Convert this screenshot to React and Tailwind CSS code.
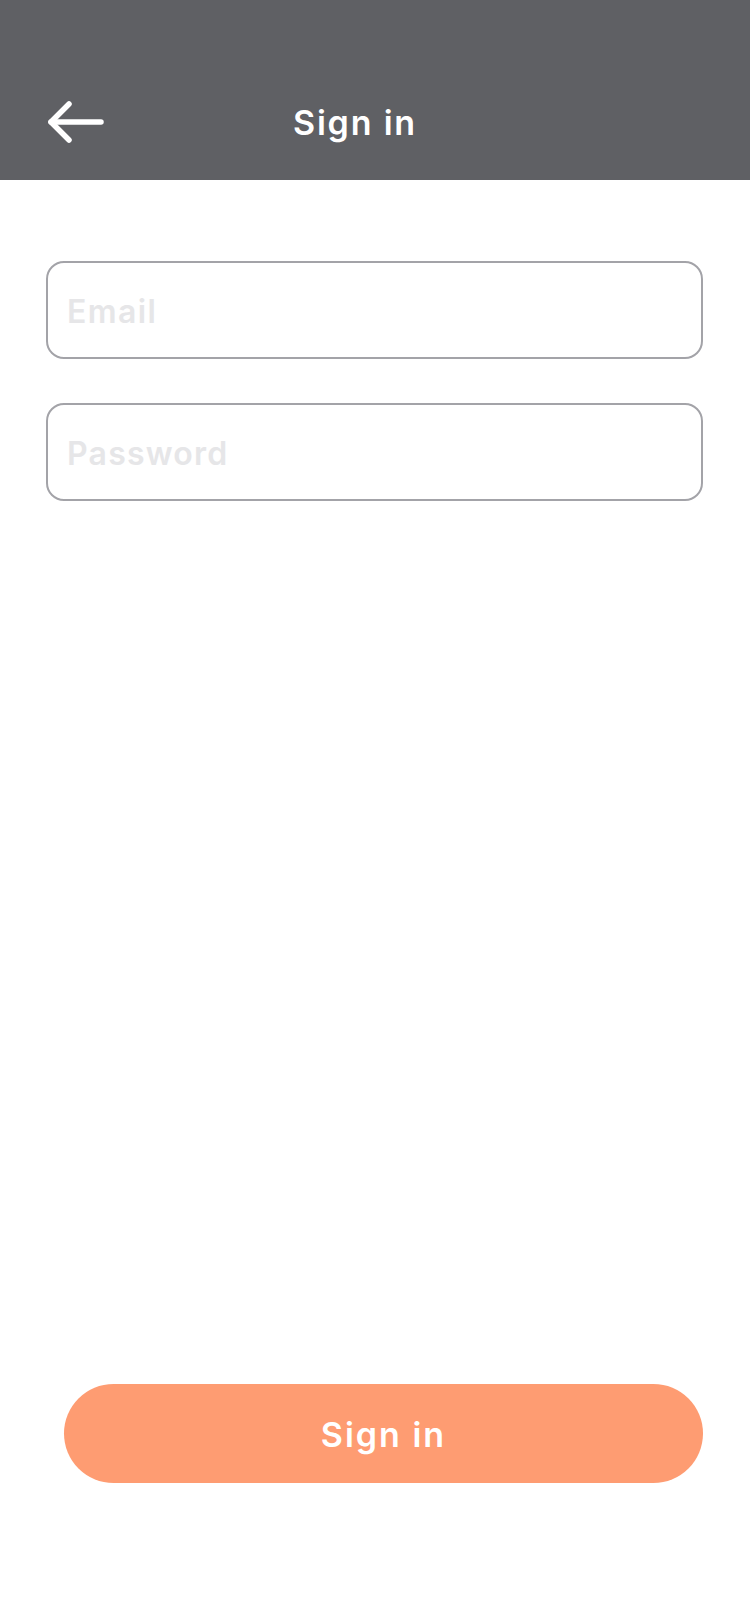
import React from "react";

export default function App() {
  const font = { fontFamily: "Inter, 'Noto Sans', sans-serif" };
  return (
    <div className="w-[750px] h-[1624px] bg-white flex flex-col" style={font}>
      <header className="h-[180px] bg-[#5f6064] pt-[64px]">
        <div className="h-[116px] w-full flex items-center pl-[47px]">
          <svg width="58" height="44" viewBox="0 0 58 44" className="shrink-0" fill="none" stroke="white" strokeWidth="5.5" strokeLinecap="round" strokeLinejoin="round">
            <path d="M4 22 H54" />
            <path d="M22 4 L4 22 L22 40" />
          </svg>
          <h1 className="ml-[188px] pt-[2px] text-[34px] leading-[40px] font-semibold text-white tracking-[1.8px]">Sign in</h1>
        </div>
      </header>
      <main className="flex-1 flex flex-col">
        <div className="pt-[81px] pl-[46px] pr-[47px] flex flex-col gap-[44px]">
          <div className="h-[98px] rounded-[18px] border-2 border-[#a3a3a8] flex items-center px-[19px] pt-[3px]">
            <span className="text-[32px] font-semibold text-[#e6e6e8] tracking-[1.4px]">Email</span>
          </div>
          <div className="h-[98px] rounded-[18px] border-2 border-[#a3a3a8] flex items-center px-[19px] pt-[3px]">
            <span className="text-[32px] font-semibold text-[#e6e6e8] tracking-[1.2px]">Password</span>
          </div>
        </div>
        <div className="flex-1" />
        <div className="pl-[64px] pr-[47px] pb-[141px]">
          <button className="w-full h-[99px] rounded-full bg-[#fe9c72] flex items-center justify-center">
            <span className="text-[34px] font-semibold text-white tracking-[2px] pt-[2px]">Sign in</span>
          </button>
        </div>
      </main>
    </div>
  );
}
